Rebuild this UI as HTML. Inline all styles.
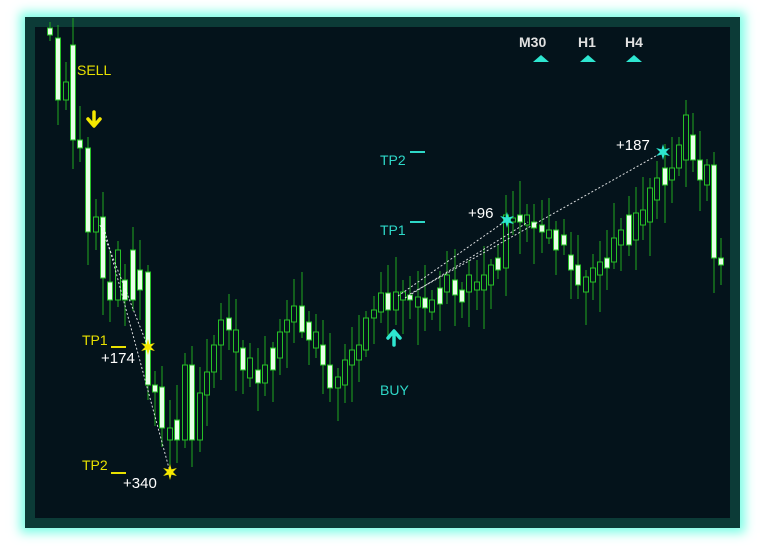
<!DOCTYPE html>
<html><head><meta charset="utf-8"><style>
html,body{margin:0;padding:0;background:#fff;width:765px;height:546px;overflow:hidden}
#frame{position:absolute;left:25px;top:17px;width:715px;height:511px;background:#0c3b37;box-shadow:0 0 10px 5px #7ffde6}
#inner{position:absolute;left:10px;top:10px;width:695px;height:491px;background:#04131b}
svg{position:absolute;left:0;top:0}
text{font-family:"Liberation Sans",sans-serif}
</style></head><body>
<div id="frame"><div id="inner"></div></div>
<svg id="s" width="765" height="546" viewBox="0 0 765 546">
<g id="c"></g>
<g stroke="#fff" stroke-width="1" stroke-dasharray="2,2" fill="none" opacity="0.85">
<line x1="100" y1="225" x2="148" y2="347"/>
<line x1="104" y1="228" x2="170" y2="472"/>
<line x1="398" y1="296" x2="507" y2="220"/>
<line x1="405" y1="298" x2="528" y2="222"/>
<line x1="410" y1="294" x2="663" y2="152"/>
</g>
<g font-size="14">
<text x="77" y="75" fill="#e8e000">SELL</text>
<text x="82" y="345" fill="#e8e000">TP1</text>
<line x1="111" y1="347" x2="126" y2="347" stroke="#e8e000" stroke-width="2"/>
<text x="101" y="363" fill="#fff" font-size="15">+174</text>
<text x="82" y="470" fill="#e8e000">TP2</text>
<line x1="111" y1="473" x2="126" y2="473" stroke="#e8e000" stroke-width="2"/>
<text x="123" y="488" fill="#fff" font-size="15">+340</text>
<text x="380" y="165" fill="#2ed8c8">TP2</text>
<line x1="410" y1="152" x2="425" y2="152" stroke="#2ed8c8" stroke-width="2"/>
<text x="380" y="235" fill="#2ed8c8">TP1</text>
<line x1="410" y1="222" x2="425" y2="222" stroke="#2ed8c8" stroke-width="2"/>
<text x="468" y="218" fill="#fff" font-size="15">+96</text>
<text x="616" y="150" fill="#fff" font-size="15">+187</text>
<text x="380" y="395" fill="#2ed8c8">BUY</text>
</g>
<g font-size="14" font-weight="bold" fill="#e0e0e0">
<text x="519" y="47">M30</text><text x="578" y="47">H1</text><text x="625" y="47">H4</text>
</g>
<g fill="#2ee6d0">
<polygon points="533,62 541,55 549,62"/><polygon points="580,62 588,55 596,62"/><polygon points="626,62 634,55 642,62"/>
</g>
<path d="M94 112 V125 M88 119 L94 126 L100 119" stroke="#f5e800" stroke-width="3.5" fill="none" stroke-linecap="round" stroke-linejoin="round"/>
<path d="M394 345 V332 M388 338 L394 331 L400 338" stroke="#2ee6d0" stroke-width="3.5" fill="none" stroke-linecap="round" stroke-linejoin="round"/>
<g id="stars"></g>
</svg>
<script>
var d=[[50,28,35,1],[58,38,100,1],[66,82,100,0],[73,45,140,1],[80,140,148,1],[88,148,232,1],[96,217,232,0],[103,217,278,1],[110,282,300,1],[118,250,300,0],[125,280,300,1],[133,250,300,1],[140,270,290,1],[148,272,385,1],[155,385,392,1],[162,387,428,1],[170,428,440,0],[177,420,440,1],[185,365,440,0],[192,365,440,1],[200,393,440,0],[207,372,395,0],[214,345,372,0],[221,320,345,0],[229,318,330,1],[236,330,352,0],[243,348,370,1],[250,358,378,0],[258,370,383,1],[265,365,383,0],[273,348,370,1],[280,332,358,0],[287,320,332,0],[294,306,322,0],[302,306,332,1],[309,322,340,1],[316,332,348,0],[323,345,365,1],[330,365,388,1],[338,377,388,0],[345,360,385,0],[352,350,365,0],[359,345,360,0],[366,318,350,0],[374,310,318,0],[381,293,312,0],[388,293,310,1],[396,292,310,0],[403,292,300,0],[410,295,300,1],[418,297,307,0],[425,298,308,1],[432,300,312,0],[440,288,304,1],[447,275,292,0],[455,280,295,1],[462,290,302,1],[469,275,292,0],[477,282,290,0],[484,275,290,0],[491,265,285,0],[498,258,270,1],[506,215,268,0],[513,218,222,0],[520,215,222,1],[527,215,225,0],[534,222,228,1],[542,225,232,1],[549,230,238,0],[556,230,250,1],[564,235,245,1],[571,255,270,1],[578,265,285,1],[586,277,292,0],[593,268,282,0],[600,262,275,0],[607,258,268,1],[614,238,262,0],[621,230,245,0],[629,215,245,1],[636,213,240,0],[643,210,225,0],[650,188,222,0],[657,178,200,0],[665,168,185,1],[672,168,180,0],[679,145,168,0],[686,115,160,0],[693,135,160,1],[700,160,180,1],[707,165,185,0],[714,165,258,1],[721,258,265,1]];
var h='';d.forEach(function(c,i){var a=(i*37)%30+6,b=(i*53)%34+6;
h+='<line x1="'+c[0]+'" y1="'+(c[1]-a)+'" x2="'+c[0]+'" y2="'+(c[2]+b)+'" stroke="#1fa81f" stroke-width="1"/>';
h+='<rect x="'+(c[0]-2.5)+'" y="'+c[1]+'" width="5" height="'+Math.max(2,c[2]-c[1])+'" fill="'+(c[3]?'#e8ffe8':'#04131b')+'" stroke="#27c027" stroke-width="1"/>';});
document.getElementById('c').innerHTML=h;
function st(x,y,col){var p='';for(var k=0;k<12;k++){var r=k%2?3:8,t=k*Math.PI/6-Math.PI/2;p+=(x+r*Math.cos(t)).toFixed(1)+','+(y+r*Math.sin(t)).toFixed(1)+' ';}return '<polygon points="'+p+'" fill="'+col+'"/>';}
document.getElementById('stars').innerHTML=st(148,347,'#f5e800')+st(170,472,'#f5e800')+st(507,220,'#2ee6d0')+st(663,152,'#2ee6d0');
</script>
</body></html>
